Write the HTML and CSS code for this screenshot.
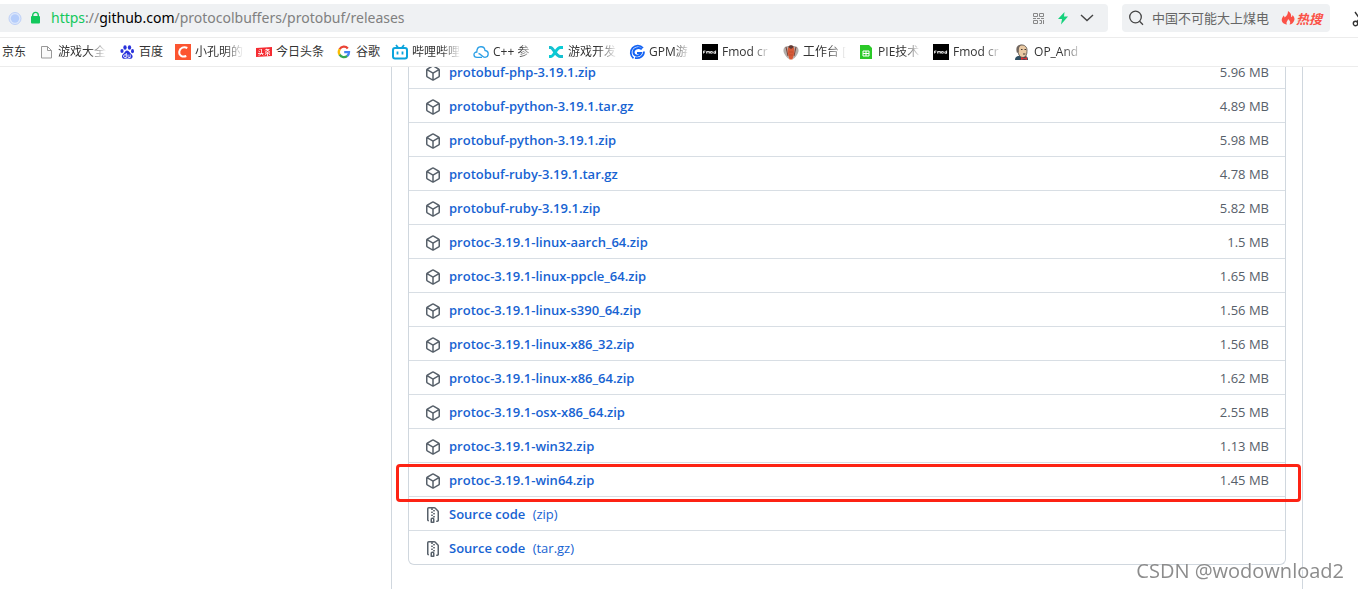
FILE: index.html
```html
<!DOCTYPE html>
<html lang="zh-CN">
<head>
<meta charset="utf-8">
<title>Releases · protocolbuffers/protobuf</title>
<link rel="stylesheet" href="styles.css">
</head>
<body>
<svg class="defs" aria-hidden="true">
  <symbol id="package" viewBox="0 0 16 16"><path fill-rule="evenodd" d="M8.878.392a1.75 1.75 0 00-1.756 0l-5.25 3.045A1.75 1.75 0 001 4.951v6.098c0 .624.332 1.2.872 1.514l5.25 3.045a1.75 1.75 0 001.756 0l5.25-3.045c.54-.313.872-.89.872-1.514V4.951c0-.624-.332-1.2-.872-1.514L8.878.392zM7.875 1.69a.25.25 0 01.25 0l4.63 2.685L8 7.133 3.245 4.375l4.63-2.685zM2.5 5.677v5.372c0 .09.047.171.125.216l4.625 2.683V8.432L2.5 5.677zm6.25 8.271l4.625-2.683a.25.25 0 00.125-.216V5.677L8.75 8.432v5.516z"/></symbol>
  <symbol id="zip" viewBox="0 0 16 16"><path fill-rule="evenodd" d="M3.5 1.75a.25.25 0 01.25-.25h3a.75.75 0 000 1.5h.5a.75.75 0 000-1.5h2.086a.25.25 0 01.177.073l2.914 2.914a.25.25 0 01.073.177v8.586a.25.25 0 01-.25.25h-.5a.75.75 0 000 1.5h.5A1.75 1.75 0 0014 12.75V4.664c0-.464-.184-.909-.513-1.237L10.573.513A1.75 1.75 0 009.336 0H3.75A1.75 1.75 0 002 1.75v11c0 .649.353 1.214.874 1.515a.75.75 0 10.752-1.298.25.25 0 01-.126-.217v-11zM8.75 3a.75.75 0 000 1.5h.5a.75.75 0 000-1.5h-.5zM6 5.25a.75.75 0 01.75-.75h.5a.75.75 0 010 1.5h-.5A.75.75 0 016 5.25zm2 1.5A.75.75 0 018.75 6h.5a.75.75 0 010 1.5h-.5A.75.75 0 018 6.75zm-1.25.75a.75.75 0 000 1.5h.5a.75.75 0 000-1.5h-.5zM8 9.75A.75.75 0 018.75 9h.5a.75.75 0 010 1.5h-.5A.75.75 0 018 9.75zm-.75.75a1.75 1.75 0 00-1.75 1.75v3c0 .414.336.75.75.75h2.5a.75.75 0 00.75-.75v-3a1.75 1.75 0 00-1.75-1.75h-.5zM7 12.25a.25.25 0 01.25-.25h.5a.25.25 0 01.25.25v2.25H7v-2.25z"/></symbol>
  <symbol id="fmod" viewBox="0 0 16 16"><rect width="16" height="16" fill="#000"/><path d="M1.500 9.500V7h2M1.500 8.200h1.500M4.500 9.500V7.500h3v2M6 7.500v2M8.500 7.500h1.800v1.700H8.500zM11.800 7.800h1.700v1.500h-1.700zM13.600 6.500v3" fill="none" stroke="#fff" stroke-width=".8"/></symbol>
</svg>

<header>
  <div class="toolbar">
    <div class="address">
      <svg class="i16" viewBox="0 0 16 16"><circle cx="8" cy="8.500" r="6" fill="#dce7fb" stroke="#bdd0f8"/><circle cx="8" cy="8.500" r="4.200" fill="#b5cdfb"/></svg>
      <svg class="i16" viewBox="0 0 16 16"><rect x="4" y="6" width="9" height="7.500" rx="1" fill="#12c85c"/><path d="M5.700 7V5.200a2.800 2.800 0 015.600 0V7" fill="none" stroke="#12c85c" stroke-width="1.400"/></svg>
      <div class="url" role="textbox" aria-label="地址"><span class="scheme">https</span>://<span class="host">github.com</span>/protocolbuffers/protobuf/releases</div>
      <button aria-label="二维码"><svg class="i16" viewBox="0 0 16 16" fill="none" stroke="#888"><path d="M2.500 3.500h4v3h-4zM8.500 3.500h4v3h-4zM2.500 10.500h4v3h-4zM8.500 10.500h2v3h-2M12.500 10v4M2 8.500h3M6 8.500h3M10 8.500h3"/></svg></button>
      <button aria-label="极速模式"><svg class="i16" viewBox="0 0 16 16"><path d="M9.500 2L3 9h4l-1 5.500 7-8H9z" fill="#16d17c"/></svg></button>
      <button aria-label="展开"><svg class="i16" viewBox="0 0 16 16"><path d="M2 5l6 5.500L14 5" fill="none" stroke="#444" stroke-width="1.400"/></svg></button>
    </div>
    <div class="search">
      <svg class="i16" viewBox="0 0 16 16" fill="none" stroke="#444" stroke-width="1.300"><circle cx="7.500" cy="7" r="5.800"/><path d="M11.600 11.200L15 14.700"/></svg>
      <input type="text" aria-label="搜索" placeholder="中国不可能大上煤电">
      <a class="hot" href="#"><svg class="i16" viewBox="0 0 16 16"><path d="M8 1c3 2 3.500 4 3 6 1 0 1.500-1 1.500-2 2 2 2.500 4 1.500 6-.7 2-2.500 3.300-4.500 3.500 1.500-2 .5-4-1.500-5.500.2 1.500-2.500 3-1 5.500C3 14 1 11.500 2 8.500c.4-1.200 1-1.500 1.500-3 .8.5 1 1.200 1 2C7 6 8 4 8 1z" fill="#fb5147"/></svg>热搜</a>
    </div>
    <button class="cut" aria-label="截图"><svg class="i16" viewBox="0 0 16 16" fill="none" stroke="#333" stroke-width="1.400"><path d="M3 1l7 10M12 1L5 11"/><circle cx="3.500" cy="12.500" r="2.200"/><circle cx="11.500" cy="12.500" r="2.200"/></svg></button>
  </div>
  <nav class="bookmarks">
    <a href="#"><span>京东</span></a>
    <a href="#"><svg class="i16" viewBox="0 0 16 16"><path d="M3.500 2.500h6l4 4v7.500h-10zM9.500 2.500v4h4" fill="#fafafa" stroke="#999"/></svg><span class="wide fade">游戏大全</span></a>
    <a href="#"><svg class="i16" viewBox="0 0 16 16" fill="#2932dc"><ellipse cx="6" cy="3.500" rx="1.700" ry="2.300"/><ellipse cx="10.500" cy="3.500" rx="1.700" ry="2.300"/><ellipse cx="3" cy="7" rx="1.600" ry="2.100"/><ellipse cx="13.500" cy="7.200" rx="1.500" ry="2.100"/><path d="M8.200 6.500c2 0 2.500 2.500 4.500 4 2 2 .5 4.700-2 4.300-2-.3-3-.3-4.800 0-2.500.4-4-2.500-2-4.600C6 8.500 6.200 6.500 8.200 6.500z"/><path d="M7.300 9v4.500H5.700c-1.500 0-1.500-2.700 0-2.700h1.600M9 10.500v2.200c0 .5.300.8.800.8h1.400v-3" fill="none" stroke="#fff" stroke-width=".9"/></svg><span>百度</span></a>
    <a href="#"><svg class="i16" viewBox="0 0 16 16"><rect width="16" height="16" fill="#fc5531"/><path d="M12.300 4C9 2.300 5 3.500 4.300 7.500c-.6 4 3 6 7 4.500" fill="none" stroke="#fff" stroke-width="2"/></svg><span class="wide fade">小孔明的</span></a>
    <a href="#"><svg class="i16" viewBox="0 0 16 16"><path d="M0 4l16-1v9L0 13z" fill="#f52b31"/><path d="M3.500 5l1 1M2.500 7l1.500 1M2 9.500h5.500M5.500 5v4c0 1-1 2-3 2.300M5.500 9.500l1.800 1.800M10.500 4.700L9 6.500M10 5.500h3.300L9 8.200M10.500 6l3.500 2M9 9h5M11.500 8v4M10.500 9.500L9 11.300M12.500 9.500l1.500 1.500" stroke="#fff" stroke-width=".8" fill="none"/></svg><span>今日头条</span></a>
    <a href="#"><svg class="i16" viewBox="0 0 16 16" fill="none" stroke-width="2.300"><path d="M3.600 5.200A5 5 0 0111.800 4.500" stroke="#ea4335"/><path d="M3.700 5.200a5 5 0 000 5.600" stroke="#fbbc05"/><path d="M3.600 10.700a5 5 0 007.700 1.100" stroke="#34a853"/><path d="M11.200 12A5 5 0 0013 8.200H8.200" stroke="#4285f4"/></svg><span>谷歌</span></a>
    <a href="#"><svg class="i16" viewBox="0 0 16 16" fill="none" stroke="#0ca4dc"><rect x="1" y="4" width="14" height="10.500" rx="2" stroke-width="2"/><path d="M4 1l2 2.500M12 1l-2 2.500" stroke-width="1.800"/><path d="M5.500 7.500v3M10.500 7.500v3" stroke-width="1.800"/></svg><span class="wide fade">哔哩哔哩</span></a>
    <a href="#"><svg class="i16" viewBox="0 0 16 16" fill="none" stroke="#2b9fe6" stroke-width="1.300"><path d="M9 13.300H4C0 13.300 0 8 3.800 8 3.800 1 11.500 1.500 12 6.500c4.500.5 4 6.800 0 6.800-3 0-3.500-3.300-6.500-3.800"/></svg><span class="mid fade">C++ 参</span></a>
    <a href="#"><svg class="i16" viewBox="0 0 16 16" fill="none" stroke-width="3"><path d="M1 3.500h1.500c3 0 5 9 10 9H15" stroke="#16bfd0"/><path d="M1 12.500h1.500c4 0 5.500-9 10-9H15" stroke="#09cbd5"/></svg><span class="wide fade">游戏开发</span></a>
    <a href="#"><svg class="i16" viewBox="0 0 16 16" fill="none" stroke="#1463f3"><path d="M14 4A7 7 0 104.500 14.200" stroke-width="1.800"/><path d="M12.800 5.200C9 2.500 4.300 5 4.500 8.500c.3 3.700 6 4.500 7.500.5H8" stroke-width="2"/><path d="M15 7.500c0 4.500-4 7.500-9 6.500" stroke-width="1.800"/></svg><span class="narrow fade">GPM游</span></a>
    <a href="#"><svg class="i16"><use href="#fmod"/></svg><span class="wide fade">Fmod cr</span></a>
    <a href="#"><svg class="i16" viewBox="0 0 16 16"><path d="M5 2C1 1.500-.5 6 1 9c1 2.500 3 5 5 6zM11 2c4-.5 5.500 4 4 7-1 2.500-3 5-5 6z" fill="#b3aeab"/><path d="M3 3l2 9M13 3l-2 9" stroke="#754037"/><path d="M5 4c1-3 5-3 6 0 1 4 0 7-1.500 11.500h-3C5 11 4 8 5 4z" fill="#d65a38"/><path d="M5 3c1-2.500 5-2.500 6 0L8 5z" fill="#603932"/><path d="M6 8h4M6 11h4" stroke="#c14c2d"/></svg><span class="mid fade">工作台 [</span></a>
    <a href="#"><svg class="i16" viewBox="0 0 16 16"><path d="M2 1h9l3 3v11H2z" fill="#2bc928"/><path d="M5 7h6v5H5zM8 7v5M5 9.500h6" fill="none" stroke="#fff"/></svg><span class="mid fade">PIE技术</span></a>
    <a href="#"><svg class="i16"><use href="#fmod"/></svg><span class="wide fade">Fmod cr</span></a>
    <a href="#"><svg class="i16" viewBox="0 0 16 16"><path d="M1 16c0-3 2-4 4-4h6c2 0 3 1 3 4z" fill="#304e61"/><path d="M4 5c0-6 9-5 9 1 0 5-1 7-4 7.500C5 13 4 10 4 5z" fill="#e9c9a3" stroke="#4a423d" stroke-width=".8"/><path d="M3 9C1 3 4 0 8 .8 5 2 5 4 4.500 8z" fill="#71665f"/><path d="M7 5.500h1.500M10.500 5.500H12M9 10h2.500" stroke="#453731"/><path d="M7 13l3 1.200 3-1.200v3l-3-1-3 1z" fill="#db3335"/></svg><span class="wide fade">OP_And</span></a>
  </nav>
</header>

<main>
  <section class="release">
    <ul class="assets">
      <li><svg class="i16"><use href="#package"/></svg><a href="#">protobuf-php-3.19.1.zip</a><small>5.96 MB</small></li>
      <li><svg class="i16"><use href="#package"/></svg><a href="#">protobuf-python-3.19.1.tar.gz</a><small>4.89 MB</small></li>
      <li><svg class="i16"><use href="#package"/></svg><a href="#">protobuf-python-3.19.1.zip</a><small>5.98 MB</small></li>
      <li><svg class="i16"><use href="#package"/></svg><a href="#">protobuf-ruby-3.19.1.tar.gz</a><small>4.78 MB</small></li>
      <li><svg class="i16"><use href="#package"/></svg><a href="#">protobuf-ruby-3.19.1.zip</a><small>5.82 MB</small></li>
      <li><svg class="i16"><use href="#package"/></svg><a href="#">protoc-3.19.1-linux-aarch_64.zip</a><small>1.5 MB</small></li>
      <li><svg class="i16"><use href="#package"/></svg><a href="#">protoc-3.19.1-linux-ppcle_64.zip</a><small>1.65 MB</small></li>
      <li><svg class="i16"><use href="#package"/></svg><a href="#">protoc-3.19.1-linux-s390_64.zip</a><small>1.56 MB</small></li>
      <li><svg class="i16"><use href="#package"/></svg><a href="#">protoc-3.19.1-linux-x86_32.zip</a><small>1.56 MB</small></li>
      <li><svg class="i16"><use href="#package"/></svg><a href="#">protoc-3.19.1-linux-x86_64.zip</a><small>1.62 MB</small></li>
      <li><svg class="i16"><use href="#package"/></svg><a href="#">protoc-3.19.1-osx-x86_64.zip</a><small>2.55 MB</small></li>
      <li><svg class="i16"><use href="#package"/></svg><a href="#">protoc-3.19.1-win32.zip</a><small>1.13 MB</small></li>
      <li class="marked"><svg class="i16"><use href="#package"/></svg><a href="#">protoc-3.19.1-win64.zip</a><small>1.45 MB</small></li>
      <li><svg class="i16"><use href="#zip"/></svg><a href="#">Source code <span>(zip)</span></a></li>
      <li><svg class="i16"><use href="#zip"/></svg><a href="#">Source code <span>(tar.gz)</span></a></li>
    </ul>
  </section>
</main>
<div class="watermark">CSDN @wodownload2</div>
</body>
</html>
```
FILE: styles.css
```css
* { box-sizing: border-box; }
body {
  margin: 0;
  height: 100vh;
  display: flex;
  flex-direction: column;
  overflow: hidden;
  background: #fff;
  color: #333;
  font: 13px "Open Sans", "Noto Sans CJK SC", sans-serif;
}
a { color: inherit; text-decoration: none; }
button { border: 0; padding: 0; background: none; display: flex; }
.defs { display: none; }
.i16 { width: 16px; height: 16px; flex: none; display: block; }

.toolbar {
  display: flex;
  height: 38px;
  padding: 4px 0 5px;
  border-bottom: 1px solid #ececec;
  overflow: hidden;
}
.address, .search {
  display: flex;
  align-items: center;
  background: #eff1f3;
  height: 28px;
}
.address {
  flex: 1;
  gap: 4px;
  padding: 0 13px 0 7px;
  border-radius: 0 4px 4px 0;
}
.url {
  flex: 1;
  margin-left: 4px;
  font-family: "Noto Sans", sans-serif;
  font-size: 14px;
  line-height: 20px;
  color: #808080;
  white-space: nowrap;
}
.scheme { color: #12c85c; }
.host { color: #000; }
.address button { margin-left: 4px; }
.search {
  width: 208px;
  margin-left: 14px;
  padding: 0 8px 0 6px;
  border-radius: 4px;
}
.search input {
  flex: 1;
  min-width: 0;
  margin-left: 8px;
  padding: 0;
  border: 0;
  outline: 0;
  background: none;
  font: inherit;
}
.search input::placeholder { color: #666; opacity: 1; }
.hot {
  display: flex;
  align-items: center;
  color: #fb5147;
  font-weight: 700;
  font-style: italic;
}
.cut { width: 6px; margin: 7px 0 0 22px; overflow: hidden; }

.bookmarks {
  display: flex;
  align-items: center;
  gap: 12px;
  height: 29px;
  padding-left: 2px;
  border-bottom: 1px solid #ececec;
  font-size: 12px;
  line-height: 20px;
}
.bookmarks a { display: flex; align-items: center; gap: 4px; }
.bookmarks span { white-space: nowrap; }
.bookmarks .wide { width: 49px; }
.bookmarks .mid { width: 43px; }
.bookmarks .narrow { width: 41px; }
.fade { mask-image: linear-gradient(to right, #000 60%, transparent); }

main { flex: 1; overflow: hidden; }
.release {
  display: flow-root;
  height: 100%;
  margin: 0 55px 0 391px;
  padding: 0 16px;
  border: solid #d0d7de;
  border-width: 0 1px;
}
.assets {
  margin: -13px 0 0;
  padding: 0;
  list-style: none;
  border: 1px solid #d0d7de;
  border-top: 0;
  border-radius: 6px;
}
.assets li {
  display: flex;
  align-items: center;
  position: relative;
  height: 34px;
  padding: 0 16px;
  border-top: 1px solid #d8dee4;
  color: #57606a;
  fill: #57606a;
}
.assets .i16 { margin-top: 2px; }
.assets a {
  flex: 1;
  margin-left: 8px;
  color: #1763d2;
  font-weight: 600;
  line-height: 20px;
}
.assets a span { margin-left: 4px; font-weight: 400; }
.assets small { font-size: 13px; }
.marked::after {
  content: "";
  position: absolute;
  inset: 1px -16px -6px -13px;
  border: 3px solid #fd2314;
  border-radius: 4px;
  z-index: 1;
}
.watermark {
  position: fixed;
  right: 14px;
  bottom: 4px;
  color: #8c8c8c;
  font-size: 20px;
  line-height: 28px;
  text-shadow: 1px 1px 1px #fff;
}
```
